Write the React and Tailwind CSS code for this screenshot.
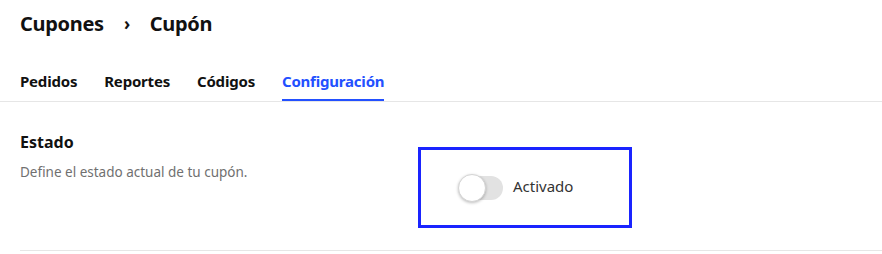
import { useState } from 'react';

function Toggle({ on, onChange }) {
  return (
    <button
      type="button"
      onClick={() => onChange(!on)}
      className="relative w-[45px] h-[28px] flex items-center"
    >
      <span className="absolute left-[2px] right-0 h-[24px] rounded-full bg-[#e2e2e2]" />
      <span
        className={`absolute top-0 ${on ? 'left-[17px]' : 'left-0'} w-[28px] h-[28px] rounded-full bg-white border border-[#d4d4d4] shadow-[0_1px_3px_rgba(0,0,0,0.25)]`}
      />
    </button>
  );
}

export default function App() {
  const [active, setActive] = useState(false);
  const tabs = ['Pedidos', 'Reportes', 'Códigos', 'Configuración'];
  const current = 'Configuración';

  return (
    <div className="w-full min-h-[254px] bg-white font-['Noto_Sans',sans-serif] text-[#111]">
      <div className="px-5 pt-[10px]">
        <h1 className="flex items-center text-[20px] leading-[28px] font-bold tracking-[-0.3px]">
          <span>Cupones</span>
          <span className="mx-[20px] text-[17px] font-bold">›</span>
          <span>Cupón</span>
        </h1>
      </div>

      <div className="mt-[32px] border-b border-[#e6e6e6]">
        <nav className="flex gap-[27px] px-5">
          {tabs.map((t) => (
            <span
              key={t}
              className={`pb-[7px] border-b-2 text-[15px] leading-[22px] font-bold tracking-[-0.2px] ${
                t === current ? 'border-[#2350ff] text-[#2350ff]' : 'border-transparent text-[#111]'
              }`}
            >
              {t}
            </span>
          ))}
        </nav>
      </div>

      <section className="ml-5 flex border-b border-[#e6e6e6] pt-[28px] pb-[22px]">
        <div className="w-[398px]">
          <h2 className="text-[16px] leading-[24px] font-bold">Estado</h2>
          <p className="mt-[8px] text-[13.5px] leading-[20px] text-[#707070]">
            Define el estado actual de tu cupón.
          </p>
        </div>
        <div className="mt-[17px] w-[214px] h-[81px] border-[3px] border-[#1a24ff] flex items-center pl-[37px] gap-[10px]">
          <Toggle on={active} onChange={setActive} />
          <span className="relative -top-[2px] text-[15px] leading-[22px] text-[#333]">Activado</span>
        </div>
      </section>
    </div>
  );
}
